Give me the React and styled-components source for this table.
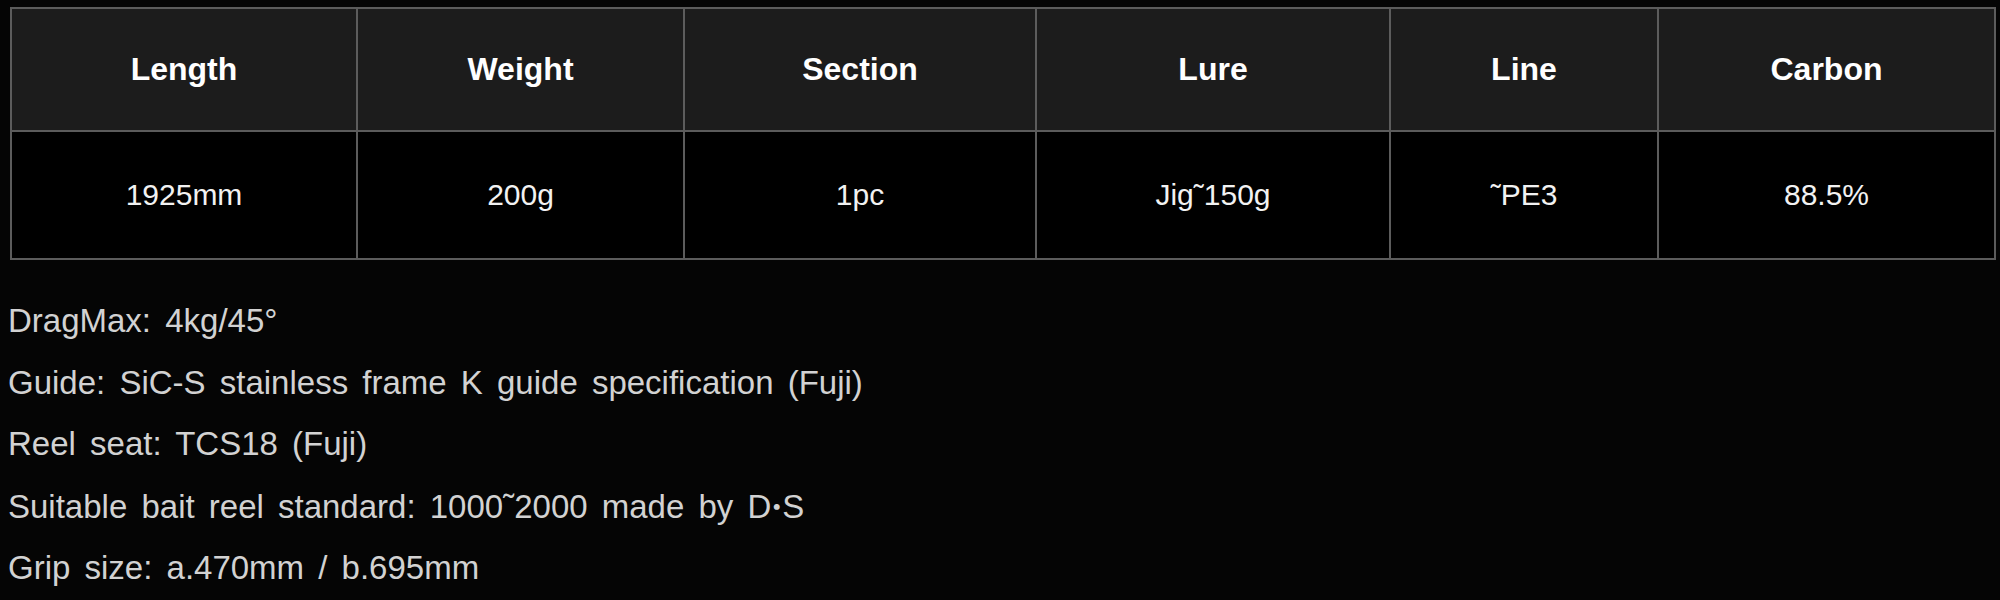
import React from "react";
import styled, { createGlobalStyle } from "styled-components";

const GlobalStyle = createGlobalStyle`
  html, body {
    margin: 0;
    padding: 0;
    background: #050505;
  }
  body {
    font-family: "Liberation Sans", Arial, "Noto Sans CJK JP", sans-serif;
  }
`;

const Page = styled.div`
  padding: 7px 4px 0 8px;
  background: #050505;
  min-height: 600px;
  box-sizing: border-box;
`;

const SpecTable = styled.div`
  margin-left: 2px;
  display: grid;
  grid-template-columns: 344px 325px 350px 352px 266px 335px;
  grid-template-rows: 121px 126px;
  gap: 2px;
  padding: 2px;
  width: max-content;
  background: #5c5c5c;
`;

const Cell = styled.div`
  display: flex;
  align-items: center;
  justify-content: center;
  background: ${(p) => (p.$head ? "#1c1c1c" : "#000000")};
  color: ${(p) => (p.$head ? "#ffffff" : "#f2f2f2")};
  font-size: ${(p) => (p.$head ? "32px" : "30px")};
  font-weight: ${(p) => (p.$head ? 700 : 400)};
  white-space: nowrap;
`;

const Notes = styled.div`
  margin-top: 30px;
  color: #d2d2d2;
  font-size: 33px;
  line-height: 61.5px;
  word-spacing: 5px;
`;

const Note = styled.div`
  white-space: nowrap;
`;

const Dot = styled.span`
  font-family: "Noto Sans CJK JP", sans-serif;
  font-size: 30px;
  font-weight: 700;
  margin: 0 -2px;
`;

const heads = ["Length", "Weight", "Section", "Lure", "Line", "Carbon"];
const values = ["1925mm", "200g", "1pc", "Jig\u02DC150g", "\u02DCPE3", "88.5%"];

export default function App() {
  return (
    <>
      <GlobalStyle />
      <Page>
        <SpecTable>
          {heads.map((h) => (
            <Cell key={h} $head>
              {h}
            </Cell>
          ))}
          {values.map((v) => (
            <Cell key={v}>{v}</Cell>
          ))}
        </SpecTable>
        <Notes>
          <Note>DragMax: 4kg/45°</Note>
          <Note>Guide: SiC-S stainless frame K guide specification (Fuji)</Note>
          <Note>Reel seat: TCS18 (Fuji)</Note>
          <Note>
            Suitable bait reel standard: 1000{"\u02DC"}2000 made by D<Dot>･</Dot>S
          </Note>
          <Note>Grip size: a.470mm / b.695mm</Note>
        </Notes>
      </Page>
    </>
  );
}
